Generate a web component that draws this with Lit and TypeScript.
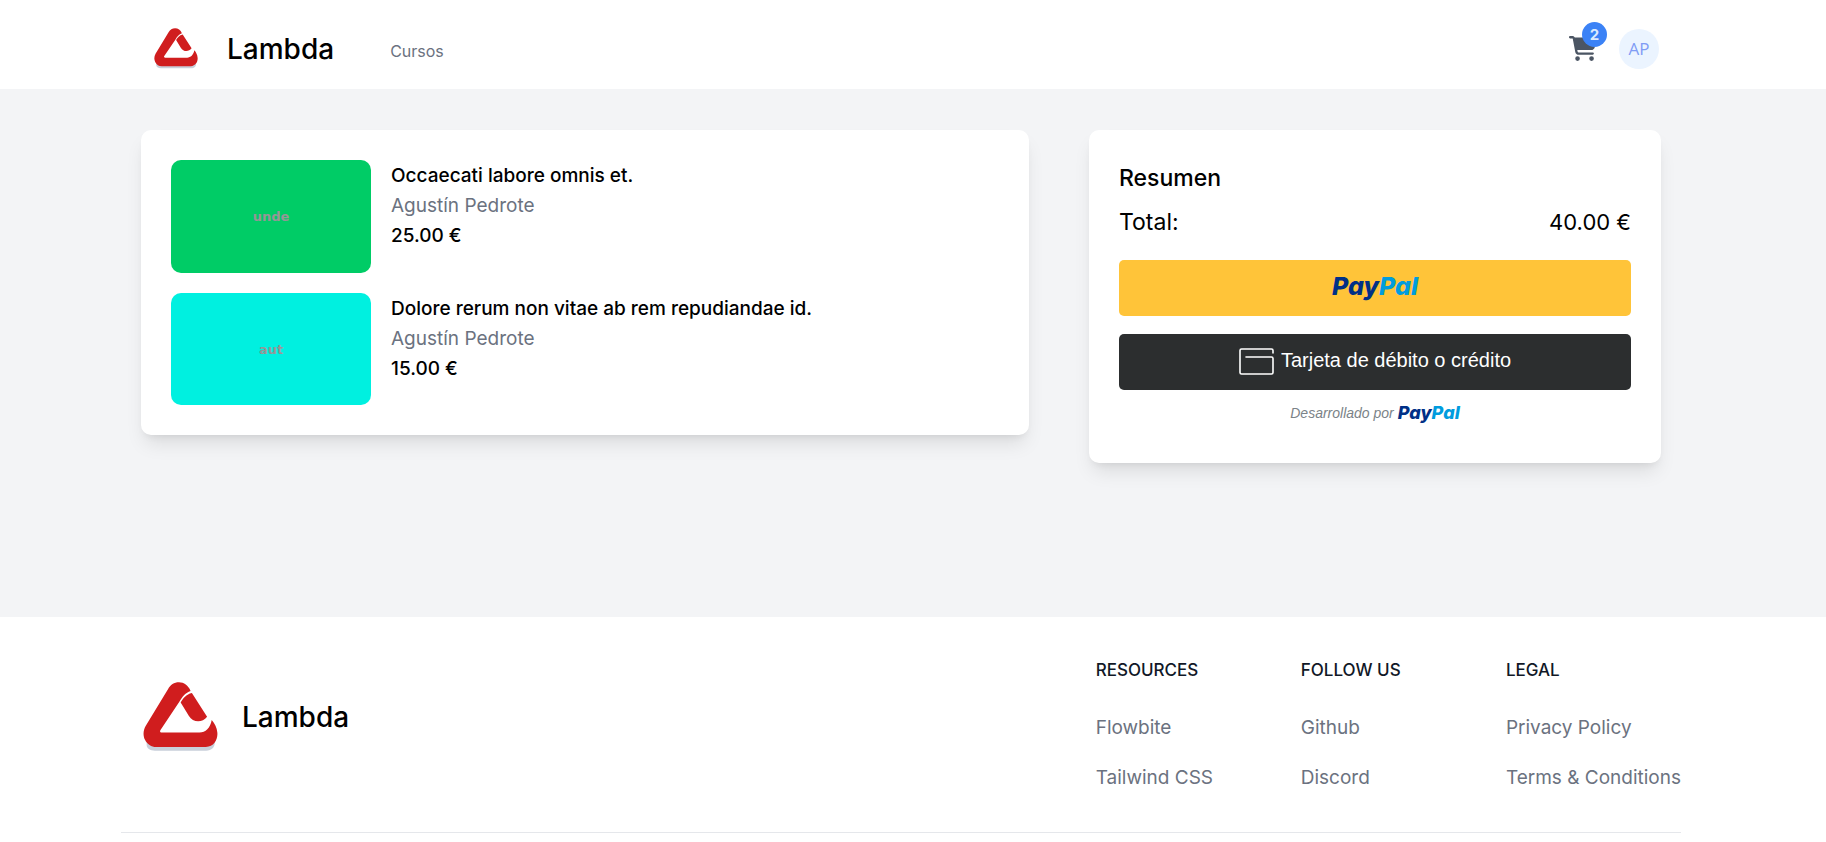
import { LitElement, html, css, svg } from "lit";
import { customElement, property } from "lit/decorators.js";

interface Course {
  title: string;
  teacher: string;
  price: number;
  cover: string;
  tone: "green" | "cyan";
}

const euros = (value: number) => `${value.toFixed(2)} €`;

@customElement("brand-logo")
export class BrandLogo extends LitElement {
  static styles = css`
    :host {
      display: block;
      flex: none;
    }
    svg {
      display: block;
      width: 100%;
      height: auto;
    }
  `;

  render() {
    return html`<svg viewBox="9 35 227 210" aria-hidden="true">
      ${svg`
        <path fill="#c9cfda" d="M20 215 H226 C228 232 216 243 200 243 H45 C30 243 20 236 20 226 Z" />
        <path fill="#d01d1e" d="M153 62 C146 45 133 36 118 36 C103 36 92 44 85 56 L17 168 C10 180 8 196 15 210 C22 224 34 232 49 232 H199 C225 231 236 208 234 188 C233 174 226 160 217 150 C213 174 198 188 180 188 H66 C61 188 59 184 62 180 L119 95 C128 79 138 67 153 62 Z" />
        <path fill="#d01d1e" d="M157 68 C140 72 130 84 123 97 L148 138 C160 158 188 160 203 140 Z" />
      `}
    </svg>`;
  }
}

@customElement("paypal-mark")
export class PaypalMark extends LitElement {
  static styles = css`
    :host {
      display: inline-block;
      font-family: Inter, "Open Sans", sans-serif;
      font-style: italic;
      font-weight: 800;
      line-height: 1;
    }
    .pay {
      color: #003087;
    }
    .pal {
      color: #009cde;
    }
  `;

  render() {
    return html`<span class="pay">Pay</span><span class="pal">Pal</span>`;
  }
}

@customElement("site-header")
export class SiteHeader extends LitElement {
  @property({ type: Number }) count = 0;

  static styles = css`
    :host {
      display: block;
      background: #fff;
      padding: 8px var(--gutter-end) 0 var(--gutter-start);
    }
    .bar {
      display: flex;
      align-items: center;
      max-width: 1560px;
      height: 81px;
      margin-inline: auto;
      padding-inline: 33px 22px;
      box-sizing: border-box;
    }
    a {
      color: inherit;
      text-decoration: none;
    }
    .brand {
      display: flex;
      align-items: center;
      gap: 29px;
      font-size: 28px;
      font-weight: 500;
    }
    .name {
      padding-top: 2px;
    }
    brand-logo {
      width: 44px;
    }
    nav {
      padding: 4px 0 0 56px;
      font-size: 16px;
      color: #6b7280;
    }
    .tools {
      display: flex;
      align-items: center;
      gap: 22px;
      margin-left: auto;
    }
    .cart {
      position: relative;
      color: #4b5563;
    }
    .cart svg {
      display: block;
      width: 28px;
      height: 25px;
    }
    .badge {
      position: absolute;
      top: -14px;
      left: 13px;
      width: 25px;
      height: 25px;
      border-radius: 50%;
      background: #3b82f6;
      color: #dbeafe;
      font-size: 15px;
      font-weight: 700;
      line-height: 25px;
      text-align: center;
    }
    .avatar {
      width: 40px;
      height: 40px;
      padding: 0;
      border: 0;
      border-radius: 50%;
      background: #ebf4ff;
      color: #7f9cf5;
      font: 400 17px/40px "Open Sans", sans-serif;
    }
  `;

  render() {
    return html`<header class="bar">
      <a class="brand" href="#"><brand-logo></brand-logo><span class="name">Lambda</span></a>
      <nav><a href="#">Cursos</a></nav>
      <div class="tools">
        <a class="cart" href="#" aria-label="Carrito">
          <svg viewBox="0 0 576 512" fill="currentColor" aria-hidden="true">
            <path
              d="M0 24C0 10.7 10.7 0 24 0H69.5c22 0 41.5 12.8 50.6 32h411c26.3 0 45.5 25 38.6 50.4l-41 152.3c-8.5 31.4-37 53.3-69.5 53.3H170.7l5.4 28.5c2.2 11.3 12.1 19.5 23.6 19.5H488c13.3 0 24 10.7 24 24s-10.7 24-24 24H199.7c-34.6 0-64.3-24.6-70.7-58.5L77.4 54.5c-.7-3.8-4-6.5-7.9-6.5H24C10.7 48 0 37.3 0 24zM128 464a48 48 0 1 1 96 0 48 48 0 1 1 -96 0zm336-48a48 48 0 1 1 0 96 48 48 0 1 1 0-96z"
            />
          </svg>
          <span class="badge">${this.count}</span>
        </a>
        <button class="avatar" type="button">AP</button>
      </div>
    </header>`;
  }
}

@customElement("cart-list")
export class CartList extends LitElement {
  @property({ attribute: false }) courses: Course[] = [];

  static styles = css`
    :host {
      display: block;
    }
    ul {
      display: grid;
      gap: 20px;
      margin: 0;
      padding: 0;
      list-style: none;
    }
    li {
      display: flex;
      gap: 20px;
      font-size: 19px;
      line-height: 30px;
    }
    .cover {
      display: grid;
      place-items: center;
      flex: none;
      box-sizing: border-box;
      width: 200px;
      aspect-ratio: 16 / 9;
      padding-top: 2px;
      border-radius: 10px;
      color: #969696;
      font: 700 13px/20px "DejaVu Sans", Verdana, sans-serif;
    }
    .green {
      background: #00cc66;
    }
    .cyan {
      background: #00f0e0;
    }
    .info {
      padding-top: 1px;
    }
    h2,
    p {
      margin: 0;
      font-size: inherit;
      font-weight: 500;
    }
    .teacher {
      color: #6b7280;
      font-weight: 400;
    }
  `;

  render() {
    return html`<ul>
      ${this.courses.map(
        (c) => html`<li>
          <div class="cover ${c.tone}">${c.cover}</div>
          <div class="info">
            <h2>${c.title}</h2>
            <p class="teacher">${c.teacher}</p>
            <p>${euros(c.price)}</p>
          </div>
        </li>`
      )}
    </ul>`;
  }
}

@customElement("order-summary")
export class OrderSummary extends LitElement {
  @property({ type: Number }) total = 0;

  static styles = css`
    :host {
      display: block;
    }
    h2 {
      margin: 0 0 8px;
      font-size: 23px;
      font-weight: 500;
      line-height: 37px;
    }
    .total {
      display: flex;
      justify-content: space-between;
      margin-bottom: 20px;
      font-size: 23px;
      line-height: 35px;
    }
    .amount {
      font-size: 22px;
    }
    .actions {
      display: grid;
      gap: 18px;
    }
    button {
      display: flex;
      align-items: center;
      justify-content: center;
      gap: 7px;
      height: 56px;
      padding: 0 0 2px;
      border: 0;
      border-radius: 5px;
      font: 20px/24px "Liberation Sans", Arial, sans-serif;
    }
    .paypal {
      background: #ffc439;
    }
    .paypal paypal-mark {
      font-size: 25px;
      padding-bottom: 2px;
    }
    .card {
      background: #2c2e2f;
      color: #fff;
    }
    .card span {
      padding-bottom: 2px;
    }
    .card svg {
      width: 35px;
      height: 27px;
    }
    .powered {
      display: flex;
      align-items: center;
      justify-content: center;
      gap: 4px;
      margin: 12px 0 9px;
      color: #7b8388;
      font: italic 14px/22px "Liberation Sans", Arial, sans-serif;
    }
    .powered paypal-mark {
      font-size: 18px;
    }
  `;

  render() {
    return html`
      <h2>Resumen</h2>
      <div class="total"><span>Total:</span><span class="amount">${euros(this.total)}</span></div>
      <div class="actions">
        <button class="paypal" type="button"><paypal-mark></paypal-mark></button>
        <button class="card" type="button">
          <svg viewBox="0 0 35 27" fill="none" stroke="#fff" stroke-width="1.6" stroke-linecap="round" aria-hidden="true">
            <path d="M34 5V2.5a1.5 1.5 0 0 0-1.5-1.5H2.500a1.500 1.500 0 0 0-1.500 1.500v22a1.500 1.500 0 0 0 1.500 1.500h30a1.500 1.500 0 0 0 1.500-1.500V10.500a1.500 1.500 0 0 0-1.500-1.500H7" />
          </svg>
          <span>Tarjeta de débito o crédito</span>
        </button>
      </div>
      <div class="powered">Desarrollado por <paypal-mark></paypal-mark></div>
    `;
  }
}

@customElement("site-footer")
export class SiteFooter extends LitElement {
  private groups = [
    { title: "RESOURCES", links: ["Flowbite", "Tailwind CSS"] },
    { title: "FOLLOW US", links: ["Github", "Discord"] },
    { title: "LEGAL", links: ["Privacy Policy", "Terms & Conditions"] },
  ];

  static styles = css`
    :host {
      display: block;
      background: #fff;
      padding: 41px var(--gutter-end) 0 var(--gutter-start);
    }
    footer {
      max-width: 1560px;
      margin-inline: auto;
    }
    .top {
      display: flex;
      flex-wrap: wrap;
      justify-content: space-between;
      align-items: flex-start;
      gap: 30px;
      padding-bottom: 39px;
      border-bottom: 1px solid #e5e7eb;
    }
    a {
      color: inherit;
      text-decoration: none;
    }
    .brand {
      display: flex;
      align-items: center;
      gap: 24px;
      padding: 24px 0 0 22px;
      font-size: 28px;
      font-weight: 500;
    }
    brand-logo {
      width: 75px;
    }
    .groups {
      display: grid;
      grid-template-columns: repeat(3, 1fr);
      gap: 30px;
    }
    h2 {
      margin: 0 0 30px;
      color: #111827;
      font-size: 17px;
      font-weight: 500;
      line-height: 25px;
    }
    ul {
      display: grid;
      gap: 20px;
      margin: 0;
      padding: 0;
      list-style: none;
      color: #6b7280;
      font-size: 19px;
      line-height: 30px;
    }
    @media (max-width: 700px) {
      .groups {
        grid-template-columns: repeat(2, 1fr);
      }
    }
  `;

  render() {
    return html`<footer>
      <div class="top">
        <a class="brand" href="#"><brand-logo></brand-logo>Lambda</a>
        <div class="groups">
          ${this.groups.map(
            (g) => html`<section>
              <h2>${g.title}</h2>
              <ul>
                ${g.links.map((l) => html`<li><a href="#">${l}</a></li>`)}
              </ul>
            </section>`
          )}
        </div>
      </div>
    </footer>`;
  }
}

@customElement("app-root")
export class AppRoot extends LitElement {
  private courses: Course[] = [
    { title: "Occaecati labore omnis et.", teacher: "Agustín Pedrote", price: 25, cover: "unde", tone: "green" },
    { title: "Dolore rerum non vitae ab rem repudiandae id.", teacher: "Agustín Pedrote", price: 15, cover: "aut", tone: "cyan" },
  ];

  static styles = css`
    :host {
      --gutter-start: 20px;
      --gutter-end: 44px;
      display: flex;
      flex-direction: column;
      min-height: 100vh;
      background: #f3f4f6;
      color: #000;
      font-family: Inter, "Open Sans", sans-serif;
    }
    main {
      padding: 41px var(--gutter-end) 154px var(--gutter-start);
    }
    .grid {
      display: grid;
      grid-template-columns: repeat(5, 1fr);
      align-items: start;
      gap: 60px;
      max-width: 1520px;
      margin-inline: auto;
    }
    .card {
      padding: 30px;
      border-radius: 10px;
      background: #fff;
      box-shadow: 0 12px 19px -4px rgb(0 0 0 / 0.1), 0 5px 8px -5px rgb(0 0 0 / 0.1);
    }
    .items {
      grid-column: span 3;
    }
    .summary {
      grid-column: span 2;
    }
    site-footer {
      flex: 1;
    }
    @media (max-width: 1000px) {
      .items,
      .summary {
        grid-column: 1 / -1;
      }
      .grid {
        column-gap: 0;
      }
    }
  `;

  render() {
    const total = this.courses.reduce((sum, c) => sum + c.price, 0);
    return html`
      <site-header .count=${this.courses.length}></site-header>
      <main>
        <div class="grid">
          <cart-list class="card items" .courses=${this.courses}></cart-list>
          <order-summary class="card summary" .total=${total}></order-summary>
        </div>
      </main>
      <site-footer></site-footer>
    `;
  }
}
